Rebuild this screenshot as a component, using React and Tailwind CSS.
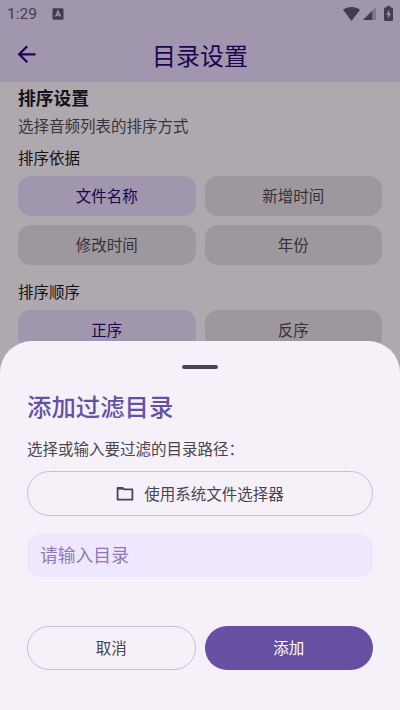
import React, { useState } from 'react';
import clsx from 'clsx';

const SORT_FIELDS = ['文件名称', '新增时间', '修改时间', '年份'];
const SORT_ORDERS = ['正序', '反序'];

const StatusBar = () => (
  <div className="flex h-[27px] items-center justify-between px-[7px] text-[#423d4a]">
    <div className="flex items-center gap-[15px]">
      <span className="pt-px font-['Roboto',sans-serif] text-[15.5px] leading-[27px]">1:29</span>
      <svg className="h-[12px] w-[12px]" viewBox="0 0 12 12">
        <rect x="0.5" y="0.3" width="11" height="11.4" rx="1.3" fill="currentColor" />
        <path d="M3.6 8.6 6 3l2.4 5.6M4.4 7h3.2" fill="none" stroke="#a297af" strokeWidth="1.3" />
      </svg>
    </div>
    <div className="flex items-center">
      <svg className="h-[14px] w-[17px]" viewBox="0 0 17 14">
        <path d="M0 2.8C5 -.9 12 -.9 17 2.8L8.5 14Z" fill="currentColor" />
      </svg>
      <svg className="ml-[3px] h-[13px] w-[13px]" viewBox="0 0 13 13">
        <path d="M0 13 13 0V13Z" fill="currentColor" opacity="0.35" />
        <path d="M0 13 9.2 3.8V13Z" fill="currentColor" />
      </svg>
      <svg className="ml-[8px] h-[15px] w-[9px]" viewBox="0 0 9 15">
        <path d="M2.7 0h3.6v1.4H8q1 0 1 1V14q0 1-1 1H1q-1 0-1-1V2.4q0-1 1-1h1.7Z" fill="currentColor" />
        <path d="M5.2 3.8 2.2 8.8h1.9v3.6L7 7.4H5.2Z" fill="#a297af" />
      </svg>
    </div>
  </div>
);

const Header = () => (
  <header className="h-[82px] bg-[#a096ad]">
    <StatusBar />
    <div className="relative flex h-[55px] items-center justify-center">
      <button className="absolute left-[15px] top-[15px] text-[#1d0450]" aria-label="返回">
        <svg className="h-6 w-6" viewBox="0 0 24 24" fill="none" stroke="currentColor" strokeWidth="2.2">
          <path d="M20.5 12.3H4.5M12.2 4.3l-8 8 8 8" />
        </svg>
      </button>
      <h1 className="text-[24px] leading-[34px] text-[#1d0450]">目录设置</h1>
    </div>
  </header>
);

const OptionGrid = ({ options, value, onChange }) => (
  <div className="grid grid-cols-2 gap-[9px]">
    {options.map((option) => (
      <button
        key={option}
        onClick={() => onChange(option)}
        className={clsx(
          'h-10 rounded-[13px] pb-0.5 text-[15.5px] leading-[38px]',
          option === value ? 'bg-[#a096ad] text-[#1d0450]' : 'bg-[#9d989e] text-[#353139]'
        )}
      >
        {option}
      </button>
    ))}
  </div>
);

const FilterSheet = () => {
  const [path, setPath] = useState('');

  return (
    <div className="absolute inset-x-0 bottom-0 flex h-[369.5px] flex-col rounded-t-[32px] bg-[#f6f1f9] px-[27px] pt-[24.5px]">
      <div className="h-1 w-[36px] self-center rounded-full bg-[#49454f]" />
      <h2 className="mt-[19px] text-[24.4px] font-medium leading-[36px] text-[#6650a4]">添加过滤目录</h2>
      <p className="mt-[12px] text-[15.5px] leading-6 text-[#49454f]">选择或输入要过滤的目录路径：</p>

      <button className="mt-[11px] flex h-[45px] shrink-0 items-center justify-center gap-[10px] rounded-full border border-[#c6c0cc] text-[15.5px] text-[#49454f]">
        <svg className="h-[18px] w-[18px]" viewBox="0 0 18 18" fill="none" stroke="currentColor" strokeWidth="1.8">
          <path d="M1.6 2.8h5l1.5 1.6h8.3v10.2H1.6Z" strokeLinejoin="round" />
          <path d="M1.6 3.7h5.6" />
        </svg>
        <span>使用系统文件选择器</span>
      </button>

      <input
        value={path}
        onChange={(e) => setPath(e.target.value)}
        placeholder="请输入目录"
        className="mt-[18px] h-[43px] w-full shrink-0 rounded-[13px] bg-[#efe7fd] px-[13px] pb-[3px] text-[17.8px] text-[#49454f] outline-none placeholder:text-[#8e78b8]"
      />

      <div className="mt-[49px] grid grid-cols-2 gap-[9px] text-[15.5px]">
        <button className="h-11 rounded-full border border-[#c6c0cc] text-[#49454f]">取消</button>
        <button className="h-11 rounded-full bg-[#6650a4] text-white">添加</button>
      </div>
    </div>
  );
};

const App = () => {
  const [field, setField] = useState('文件名称');
  const [order, setOrder] = useState('正序');

  return (
    <div className="relative h-[710px] w-[400px] overflow-hidden bg-[#aea9af] font-['Noto_Sans_CJK_SC',sans-serif]">
      <Header />
      <main className="px-[18px] pt-[2px]">
        <h2 className="text-[17.8px] font-bold leading-[26px] text-[#141217]">排序设置</h2>
        <p className="mt-[3px] text-[15.5px] leading-6 text-[#38343d]">选择音频列表的排序方式</p>
        <h3 className="mb-[7px] mt-[8px] text-[15.5px] leading-6 text-[#141217]">排序依据</h3>
        <OptionGrid options={SORT_FIELDS} value={field} onChange={setField} />
        <h3 className="mb-[7px] mt-[14px] text-[15.5px] leading-6 text-[#141217]">排序顺序</h3>
        <OptionGrid options={SORT_ORDERS} value={order} onChange={setOrder} />
      </main>
      <FilterSheet />
    </div>
  );
};

export default App;
